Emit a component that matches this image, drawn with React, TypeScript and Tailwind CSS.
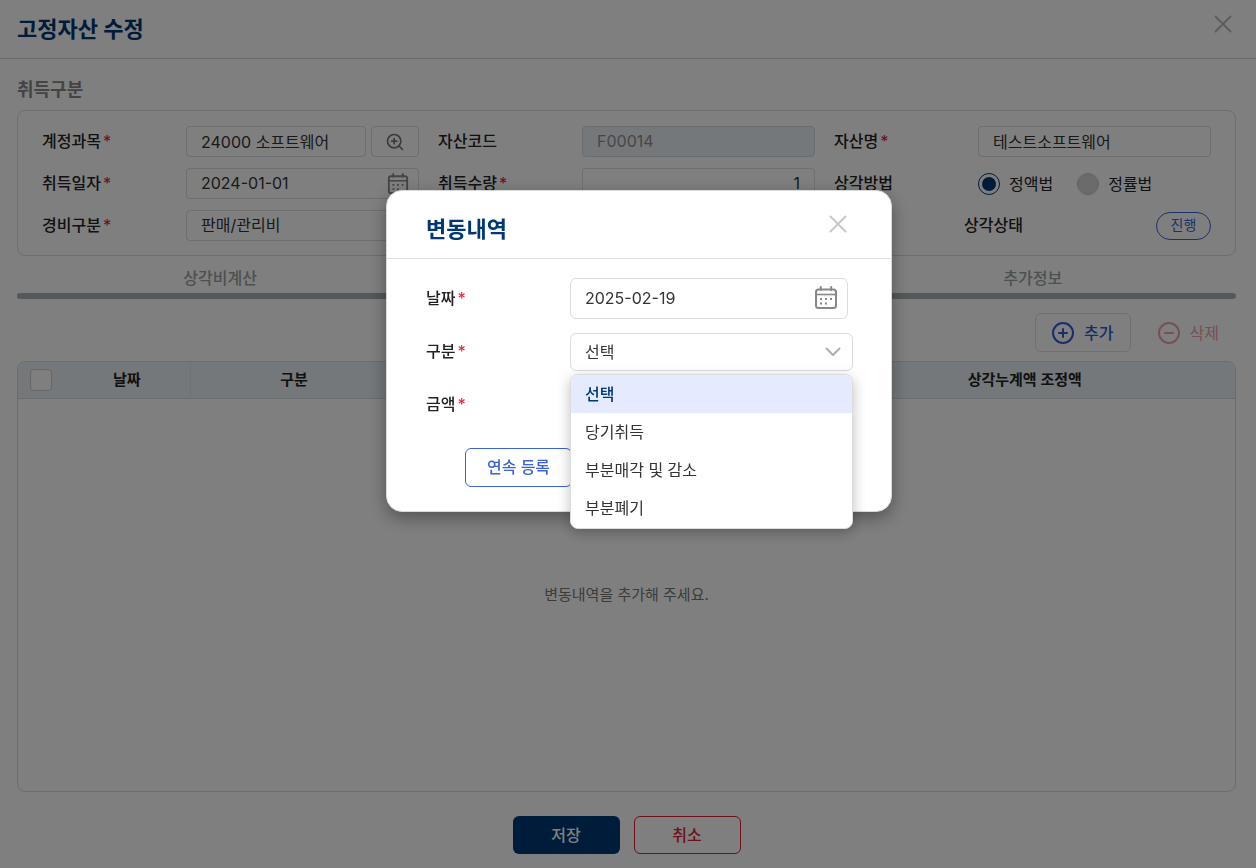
import React, { useState } from "react";
import { CircleMinus, CirclePlus, ZoomIn } from "lucide-react";

const CHANGE_TYPES = ["선택", "당기취득", "부분매각 및 감소", "부분폐기"];

const TABS = [
  { id: "depreciation", label: "상각비계산" },
  { id: "changes", label: "변동내역" },
  { id: "extra", label: "추가정보" },
];

const fieldClass =
  "h-[31px] w-full min-w-0 rounded border border-[#dcdcdc] bg-white px-3.5 pb-0.5 text-base text-[#333]";

function CalendarIcon({ className }: { className?: string }) {
  return (
    <svg
      viewBox="0 0 24 24"
      fill="none"
      stroke="currentColor"
      strokeWidth="2"
      className={className}
      aria-hidden="true"
    >
      <rect x="2" y="3.5" width="20" height="18.5" rx="2.5" />
      <path d="M2 8.5h20" strokeWidth="1.6" />
      <path d="M6.8 1v3M17.2 1v3" strokeLinecap="round" />
      <path
        d="M6 13h2M11 13h2M16 13h2M6 17.5h2M11 17.5h2"
        strokeWidth="2"
      />
    </svg>
  );
}

function CloseIcon() {
  return (
    <svg
      viewBox="0 0 18 18"
      fill="none"
      stroke="currentColor"
      strokeWidth="2"
      strokeLinecap="round"
      className="size-[18px]"
      aria-hidden="true"
    >
      <path d="M1.5 1.5l15 15M16.5 1.5l-15 15" />
    </svg>
  );
}

function ChevronIcon() {
  return (
    <svg
      viewBox="0 0 16 10"
      fill="none"
      stroke="currentColor"
      strokeWidth="2"
      strokeLinecap="round"
      strokeLinejoin="round"
      className="h-[10px] w-4"
      aria-hidden="true"
    >
      <path d="M1.5 1.5L8 8l6.5-6.5" />
    </svg>
  );
}

interface FieldLabelProps {
  htmlFor?: string;
  required?: boolean;
  children: React.ReactNode;
}

function FieldLabel({ htmlFor, required, children }: FieldLabelProps) {
  return (
    <label
      htmlFor={htmlFor}
      className="w-36 shrink-0 pb-0.5 text-base font-medium text-[#222]"
    >
      {children}
      {required && <span className="ml-0.5 text-[#e5293e]">*</span>}
    </label>
  );
}

function AssetForm() {
  return (
    <section className="grid grid-cols-3 gap-x-[19px] gap-y-[11px] rounded-lg border border-[#dcdcdc] px-6 pt-[15px] pb-3.5">
      <div className="flex items-center">
        <FieldLabel htmlFor="account" required>
          계정과목
        </FieldLabel>
        <div className="flex min-w-0 flex-1 gap-[5px]">
          <input
            id="account"
            className={fieldClass}
            defaultValue="24000 소프트웨어"
          />
          <button
            type="button"
            aria-label="계정과목 검색"
            className="flex h-[31px] w-12 shrink-0 items-center justify-center rounded border border-[#dcdcdc] text-[#777]"
          >
            <ZoomIn className="size-5" />
          </button>
        </div>
      </div>
      <div className="flex items-center">
        <FieldLabel htmlFor="code">자산코드</FieldLabel>
        <input
          id="code"
          disabled
          className="h-[31px] w-full min-w-0 rounded border border-[#d5dbe0] bg-[#eaf0f4] px-3.5 pb-0.5 text-base text-[#8f8f8f]"
          defaultValue="F00014"
        />
      </div>
      <div className="flex items-center">
        <FieldLabel htmlFor="name" required>
          자산명
        </FieldLabel>
        <input
          id="name"
          className={fieldClass}
          defaultValue="테스트소프트웨어"
        />
      </div>

      <div className="flex items-center">
        <FieldLabel htmlFor="acquired" required>
          취득일자
        </FieldLabel>
        <div className="relative min-w-0 flex-1">
          <input
            id="acquired"
            className={fieldClass}
            defaultValue="2024-01-01"
          />
          <CalendarIcon className="absolute top-[5px] right-2.5 size-[22px] text-[#888]" />
        </div>
      </div>
      <div className="flex items-center">
        <FieldLabel htmlFor="quantity" required>
          취득수량
        </FieldLabel>
        <input
          id="quantity"
          className={`${fieldClass} text-right`}
          defaultValue="1"
        />
      </div>
      <div className="flex items-center">
        <span className="w-36 shrink-0 pb-0.5 text-base font-medium text-[#222]">
          상각방법
        </span>
        <div className="flex items-center gap-6">
          <label className="flex items-center gap-[9px] text-base text-[#222]">
            <input
              type="radio"
              name="method"
              defaultChecked
              className="size-[22px] appearance-none rounded-full border border-[#003876] bg-[#003876] bg-clip-content p-[3px]"
            />
            정액법
          </label>
          <label className="flex items-center gap-[9px] text-base text-[#222]">
            <input
              type="radio"
              name="method"
              className="size-[22px] appearance-none rounded-full border border-[#c4c4c4] bg-[#d6d6d6]"
            />
            정률법
          </label>
        </div>
      </div>

      <div className="flex items-center">
        <FieldLabel htmlFor="expense" required>
          경비구분
        </FieldLabel>
        <select id="expense" className={`${fieldClass} appearance-none`}>
          <option>판매/관리비</option>
        </select>
      </div>
      <div className="col-start-3 flex items-center justify-between pl-[130px]">
        <span className="pb-0.5 text-base font-medium text-[#222]">
          상각상태
        </span>
        <button
          type="button"
          className="h-7 w-[55px] rounded-full border border-[#3a63d8] pb-0.5 text-sm text-[#3a63d8]"
        >
          진행
        </button>
      </div>
    </section>
  );
}

function ChangeTable() {
  return (
    <div className="flex flex-1 flex-col overflow-hidden rounded-lg border border-[#d5dbe0]">
      <table className="w-full table-fixed text-[15px] text-[#222]">
        <colgroup>
          <col className="w-[46px]" />
          <col className="w-[126px]" />
          <col className="w-[208px]" />
          <col className="w-[208px]" />
          <col className="w-[208px]" />
          <col />
        </colgroup>
        <thead>
          <tr className="h-9 border-b border-[#d5dbe0] bg-[#eaf0f4]">
            <th>
              <input
                type="checkbox"
                aria-label="전체 선택"
                className="ml-3 block size-[22px] appearance-none rounded border border-[#ccc] bg-white"
              />
            </th>
            <th className="font-semibold">날짜</th>
            <th className="border-l border-[#dde4e6] font-semibold">구분</th>
            <th className="border-l border-[#dde4e6] font-semibold">수량</th>
            <th className="border-l border-[#dde4e6] font-semibold">금액</th>
            <th className="border-l border-[#dde4e6] font-semibold">
              상각누계액 조정액
            </th>
          </tr>
        </thead>
      </table>
      <p className="flex flex-1 items-center justify-center text-[15px] text-[#777]">
        변동내역을 추가해 주세요.
      </p>
    </div>
  );
}

function ChangeDialog() {
  const [type, setType] = useState(CHANGE_TYPES[0]);
  const [open, setOpen] = useState(true);

  const pick = (item: string) => {
    setType(item);
    setOpen(false);
  };

  return (
    <div className="fixed inset-0 flex items-start justify-center overflow-auto bg-black/50 pt-[190px] pl-[22px]">
      <div
        role="dialog"
        aria-labelledby="dialog-title"
        className="w-[506px] rounded-2xl border border-[#d9d9d9] bg-white shadow-[0_6px_18px_rgba(0,0,0,0.35)]"
      >
        <header className="flex h-[68px] items-start justify-between border-b border-[#e0e0e0] pt-6 pr-11 pl-[39px]">
          <h2
            id="dialog-title"
            className="text-[22px] leading-7 font-bold text-[#003876]"
          >
            변동내역
          </h2>
          <button type="button" aria-label="닫기" className="text-[#c8c8c8]">
            <CloseIcon />
          </button>
        </header>

        <div className="flex flex-col pt-[19px] pr-[38px] pb-6 pl-[39px]">
          <div className="flex items-center">
            <FieldLabel htmlFor="date" required>
              날짜
            </FieldLabel>
            <div className="relative w-[278px]">
              <input
                id="date"
                className="h-[41px] w-full rounded-md border border-[#dcdcdc] px-3.5 pb-0.5 text-base text-[#333]"
                defaultValue="2025-02-19"
              />
              <CalendarIcon className="absolute top-2 right-2.5 size-6 text-[#888]" />
            </div>
          </div>

          <div className="mt-3.5 flex items-center">
            <FieldLabel htmlFor="type" required>
              구분
            </FieldLabel>
            <div className="relative min-w-0 flex-1">
              <select
                id="type"
                value={type}
                onChange={(e) => pick(e.target.value)}
                className="block h-[38px] w-full appearance-none rounded-md border border-[#dcdcdc] bg-white px-3.5 text-base text-[#333]"
              >
                {CHANGE_TYPES.map((item) => (
                  <option key={item}>{item}</option>
                ))}
              </select>
              <span className="pointer-events-none absolute top-[14px] right-3 text-[#b0b0b0]">
                <ChevronIcon />
              </span>
              {open && (
                <ul
                  role="listbox"
                  aria-label="구분"
                  className="absolute top-full right-0 left-0 z-10 mt-[3px] overflow-hidden rounded-lg border border-[#dcdcdc] bg-white pb-px shadow-[0_4px_14px_rgba(0,0,0,0.25)]"
                >
                  {CHANGE_TYPES.map((item) => (
                    <li
                      key={item}
                      role="option"
                      aria-selected={item === type}
                      onClick={() => pick(item)}
                      className={`flex h-[38px] cursor-pointer items-center px-3.5 text-base ${
                        item === type
                          ? "bg-[#e5eaff] font-medium text-[#003876]"
                          : "text-[#333]"
                      }`}
                    >
                      {item}
                    </li>
                  ))}
                </ul>
              )}
            </div>
          </div>

          <div className="mt-4 flex items-center">
            <FieldLabel htmlFor="amount" required>
              금액
            </FieldLabel>
            <input
              id="amount"
              className="h-9 w-[278px] rounded-md border border-[#dcdcdc] px-3.5 text-base text-[#333]"
            />
          </div>

          <div className="mt-[25px] flex justify-center gap-3.5">
            <button
              type="button"
              className="h-[39px] w-[107px] rounded-md border border-[#3a63d8] pb-0.5 text-base font-medium text-[#3a63d8]"
            >
              연속 등록
            </button>
            <button
              type="button"
              className={`h-[39px] w-[107px] rounded-md bg-[#003876] text-base text-white ${
                open ? "invisible" : ""
              }`}
            >
              저장
            </button>
            <button
              type="button"
              className={`h-[39px] w-[107px] rounded-md border border-[#e11d34] text-base text-[#e11d34] ${
                open ? "invisible" : ""
              }`}
            >
              취소
            </button>
          </div>
        </div>
      </div>
    </div>
  );
}

export default function App() {
  return (
    <div className="flex min-h-screen flex-col bg-white font-[Inter,'Noto_Sans_CJK_KR',sans-serif]">
      <header className="flex h-[59px] items-start justify-between border-b border-[#d4d4d4] pt-[15px] pr-6 pl-[17px]">
        <h1 className="text-[22px] leading-7 font-bold text-[#003876]">
          고정자산 수정
        </h1>
        <button type="button" aria-label="닫기" className="text-[#bbb]">
          <CloseIcon />
        </button>
      </header>

      <main className="flex flex-1 flex-col pt-[17px] pr-5 pb-3.5 pl-[17px]">
        <h2 className="mb-1.5 text-lg leading-7 font-semibold text-[#888]">
          취득구분
        </h2>

        <AssetForm />

        <nav className="mt-1 grid grid-cols-3 overflow-hidden">
          {TABS.map((tab) => (
            <a
              key={tab.id}
              href={`#${tab.id}`}
              className={`flex h-[33px] items-center justify-center pt-0.5 text-base font-medium ${
                tab.id === "changes" ? "text-[#003876]" : "text-[#9aa0a2]"
              }`}
            >
              {tab.label}
            </a>
          ))}
          <div className="col-span-3 h-1.5 rounded-full bg-[#a9b1b4]" />
        </nav>

        <div className="mt-3.5 mb-[9px] flex justify-end gap-2.5">
          <button
            type="button"
            className="flex h-[39px] items-center gap-2.5 rounded-md border border-[#e0e0e0] px-4 text-base font-medium text-[#2f5ad8]"
          >
            <CirclePlus className="-mx-px size-6" />
            추가
          </button>
          <button
            type="button"
            disabled
            className="flex h-[39px] items-center gap-2.5 rounded-md border border-transparent px-4 text-base text-[#eda0a6]"
          >
            <CircleMinus className="-mx-px size-6" />
            삭제
          </button>
        </div>

        <ChangeTable />

        <div className="mt-6 flex justify-center gap-3.5">
          <button
            type="button"
            className="h-[38px] w-[107px] rounded-md bg-[#003876] text-base font-medium text-white"
          >
            저장
          </button>
          <button
            type="button"
            className="h-[38px] w-[107px] rounded-md border border-[#e11d34] text-base font-medium text-[#e11d34]"
          >
            취소
          </button>
        </div>
      </main>

      <ChangeDialog />
    </div>
  );
}
